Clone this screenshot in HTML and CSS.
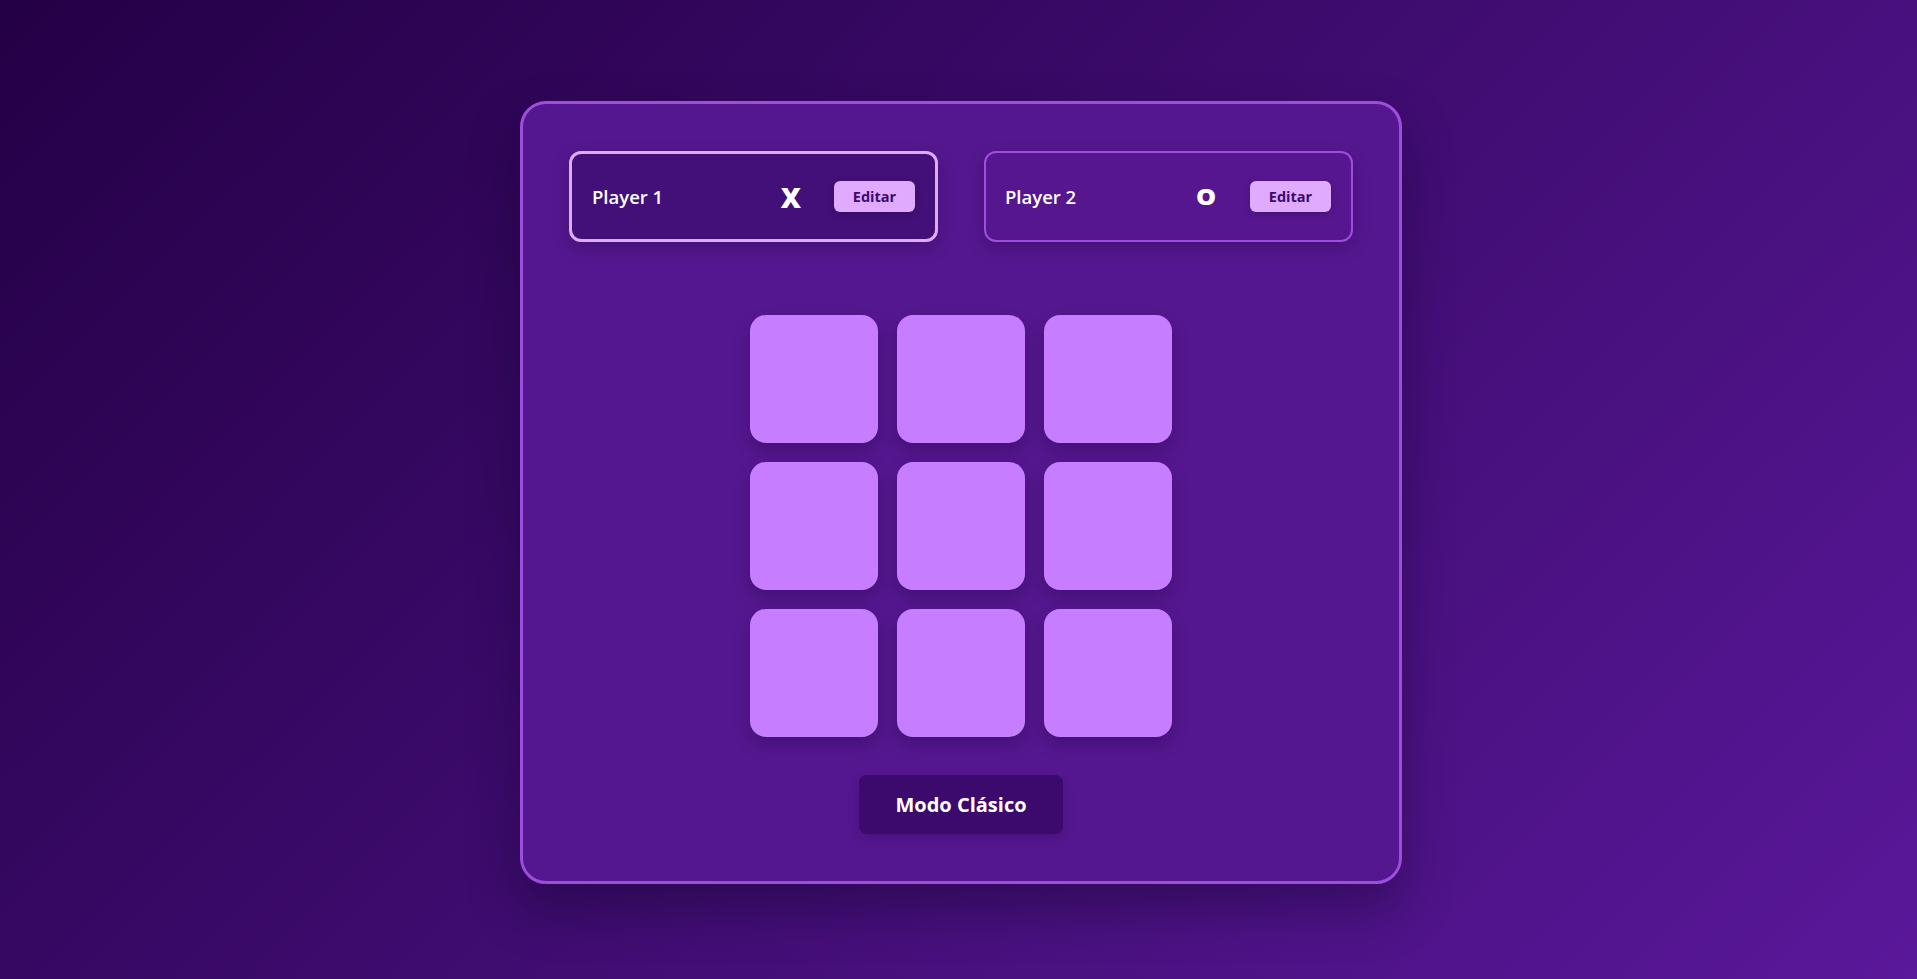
FILE: index.html
```html
<!DOCTYPE html>
<html lang="es">
<head>
<meta charset="utf-8">
<title>Tres en raya</title>
<link rel="stylesheet" href="styles.css">
</head>
<body>
<main class="page">
  <section class="card">
    <div class="players">
      <div class="player active">
        <span class="name">Player 1</span>
        <span class="symbol sym-x">X</span>
        <button class="edit">Editar</button>
      </div>
      <div class="player">
        <span class="name">Player 2</span>
        <span class="symbol sym-o">O</span>
        <button class="edit">Editar</button>
      </div>
    </div>
    <div class="board">
      <button class="cell"></button>
      <button class="cell"></button>
      <button class="cell"></button>
      <button class="cell"></button>
      <button class="cell"></button>
      <button class="cell"></button>
      <button class="cell"></button>
      <button class="cell"></button>
      <button class="cell"></button>
    </div>
    <button class="mode">Modo Clásico</button>
  </section>
</main>
</body>
</html>
```
FILE: styles.css
```css
html, body {
  margin: 0;
  padding: 0;
}
body {
  min-height: 100vh;
  background: linear-gradient(135deg, #240046 0%, #5a189a 100%);
  font-family: "Open Sans", "Noto Sans", sans-serif;
  color: #ffffff;
}
.page {
  display: flex;
  justify-content: center;
  padding: 101px 0 0 5px;
  min-height: 979px;
  box-sizing: border-box;
}
.card {
  width: 882px;
  height: 783px;
  box-sizing: border-box;
  border: 3px solid #9d4edd;
  border-radius: 26px;
  background: #55178f;
  padding: 47px 46px 48px;
  box-shadow: 0 25px 50px rgba(10, 0, 30, 0.35);
}
.players {
  display: grid;
  grid-template-columns: 1fr 1fr;
  gap: 46px;
}
.player {
  display: flex;
  align-items: center;
  height: 91px;
  box-sizing: border-box;
  padding: 0 20px 0 19px;
  border: 2px solid #9d4edd;
  border-radius: 12px;
  background: #56168f;
  box-shadow: 0 6px 16px rgba(20, 0, 50, 0.25);
}
.player.active {
  border: 3px solid #e0aaff;
  padding-left: 20px;
  background: #430f78;
}
.name {
  flex: 1;
  font-size: 18.5px;
  font-weight: 600;
  color: #ffffff;
}
.symbol {
  font-family: "Open Sans", sans-serif;
  font-weight: 800;
  color: #ffffff;
  margin-right: 33px;
  line-height: 1;
}
.sym-x {
  font-size: 28px;
}
.sym-o {
  font-size: 23px;
  margin-right: 35px;
  transform: scaleX(1.1);
}
.edit {
  width: 81px;
  height: 31px;
  border: none;
  border-radius: 6px;
  background: #e0aaff;
  color: #3c096c;
  font-family: "Open Sans", sans-serif;
  font-size: 14.5px;
  font-weight: 700;
  padding: 0;
  box-shadow: 0 2px 6px rgba(20, 0, 50, 0.25);
  cursor: pointer;
}
.board {
  display: grid;
  grid-template-columns: repeat(3, 128px);
  grid-auto-rows: 128px;
  gap: 19px;
  justify-content: center;
  margin: 73px 0 38px;
}
.cell {
  border: none;
  border-radius: 16px;
  background: #c77dff;
  box-shadow: 0 8px 16px rgba(20, 0, 50, 0.25);
  padding: 0;
  cursor: pointer;
}
.mode {
  display: block;
  margin: 0 auto;
  width: 204px;
  height: 59px;
  border: none;
  border-radius: 8px;
  background: #3c096c;
  color: #ffffff;
  font-family: "Open Sans", sans-serif;
  font-size: 20px;
  font-weight: 700;
  padding: 0;
  box-shadow: 0 4px 12px rgba(20, 0, 50, 0.2);
  cursor: pointer;
}
```
